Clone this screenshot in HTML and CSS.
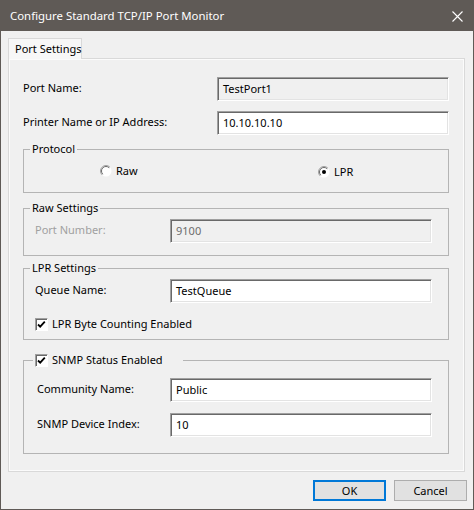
FILE: index.html
```html
<!DOCTYPE html>
<html>
  <head>
    <title>Configure Standard TCP/IP Port Monitor</title>
    <link rel="stylesheet" href="styles.css">
  </head>
  <body>
    <div class="window">
      <div class="title-bar">
        <span class="title">Configure Standard TCP/IP Port Monitor</span>
        <svg class="close-icon" width="11" height="11" viewBox="0 0 11 11">
          <path d="M0.5 0.5L10.5 10.5M10.5 0.5L0.5 10.5" stroke="#ffffff" stroke-width="1.1" fill="none"/>
        </svg>
      </div>

      <div class="tabs">
        <div class="tab">Port Settings</div>
      </div>

      <div class="panel">
        <div class="top-fields">
          <span class="field-label">Port Name:</span>
          <div class="text-box read-only">TestPort1</div>

          <span class="field-label">Printer Name or IP Address:</span>
          <div class="text-box">10.10.10.10</div>
        </div>

        <fieldset class="group protocol-group">
          <legend class="group-title">Protocol</legend>
          <div class="radio-row">
            <span class="radio raw-radio">
              <svg width="12" height="12" viewBox="0 0 12 12">
                <circle cx="6" cy="6" r="5.5" fill="#ffffff"/>
                <path d="M2.1 9.9A5.5 5.5 0 0 1 9.9 2.1" stroke="#a0a0a0" fill="none"/>
                <path d="M2.8 9.2A4.5 4.5 0 0 1 9.2 2.8" stroke="#696969" fill="none"/>
              </svg>
              Raw
            </span>
            <span class="radio lpr-radio">
              <svg width="12" height="12" viewBox="0 0 12 12">
                <circle cx="6" cy="6" r="5.5" fill="#ffffff"/>
                <path d="M2.1 9.9A5.5 5.5 0 0 1 9.9 2.1" stroke="#a0a0a0" fill="none"/>
                <path d="M2.8 9.2A4.5 4.5 0 0 1 9.2 2.8" stroke="#696969" fill="none"/>
                <circle cx="6" cy="6" r="2" fill="#000000"/>
              </svg>
              LPR
            </span>
          </div>
        </fieldset>

        <fieldset class="group raw-group">
          <legend class="group-title">Raw Settings</legend>
          <div class="group-fields">
            <span class="field-label disabled">Port Number:</span>
            <div class="text-box read-only disabled">9100</div>
          </div>
        </fieldset>

        <fieldset class="group lpr-group">
          <legend class="group-title">LPR Settings</legend>
          <div class="group-fields">
            <span class="field-label">Queue Name:</span>
            <div class="text-box">TestQueue</div>
          </div>
          <div class="check-row">
            <span class="check-box">
              <svg width="13" height="13" viewBox="0 0 13 13">
                <path d="M3 6.5L5.2 8.7L9.8 3.6" stroke="#000000" stroke-width="1.8" fill="none"/>
              </svg>
            </span>
            LPR Byte Counting Enabled
          </div>
        </fieldset>

        <fieldset class="group snmp-group">
          <legend class="group-title snmp-title">
            <span class="check-box">
              <svg width="13" height="13" viewBox="0 0 13 13">
                <path d="M3 6.5L5.2 8.7L9.8 3.6" stroke="#000000" stroke-width="1.8" fill="none"/>
              </svg>
            </span>
            SNMP Status Enabled
          </legend>
          <div class="group-fields snmp-fields">
            <span class="field-label">Community Name:</span>
            <div class="text-box">Public</div>

            <span class="field-label">SNMP Device Index:</span>
            <div class="text-box">10</div>
          </div>
        </fieldset>
      </div>

      <div class="buttons">
        <button class="dialog-button default-button">OK</button>
        <button class="dialog-button">Cancel</button>
      </div>
    </div>
  </body>
</html>
```

FILE: styles.css
```css
body {
  margin: 0;
  background-color: #f0f0f0;
  font-family: "Noto Sans", "Liberation Sans", sans-serif;
  font-size: 11px;
  color: #000000;
}

.window {
  width: 474px;
  height: 510px;
  box-sizing: border-box;
  border: 1px solid #5f5a56;
  border-top: none;
  background-color: #f0f0f0;
}

.title-bar {
  height: 31px;
  margin: 0 -1px;
  padding: 0 11px 0 10px;
  background-color: #5f5a56;
  color: #ffffff;
  display: flex;
  align-items: center;
  justify-content: space-between;
  font-size: 11.4px;
}

.close-icon {
  margin-top: 1px;
}

.tabs {
  margin-top: 7px;
  padding-left: 7px;
  display: flex;
}

.tab {
  position: relative;
  z-index: 1;
  width: 74px;
  height: 21px;
  box-sizing: border-box;
  margin-bottom: -1px;
  padding-left: 6px;
  border: 1px solid #d9d9d9;
  border-bottom: none;
  background-color: #f7f7f7;
  line-height: 19px;
  white-space: nowrap;
}

.panel {
  height: 414px;
  box-sizing: border-box;
  margin: 0 8px 0 7px;
  padding: 18px 15px 0 14px;
  border: 1px solid #d9d9d9;
  box-shadow: inset 0 0 0 1px #fbfbfb;
}

.top-fields {
  display: grid;
  grid-template-columns: 194px 232px;
  row-gap: 10px;
  align-items: center;
}

.field-label {
  margin-top: -3px;
}

.field-label.disabled {
  color: #a0a0a0;
}

.text-box {
  height: 24px;
  box-sizing: border-box;
  padding: 1px 0 0 5px;
  border: 1px solid #ffffff;
  border-top-color: #a0a0a0;
  border-left-color: #a0a0a0;
  box-shadow: inset 1px 1px 0 #696969, inset -1px -1px 0 #e3e3e3;
  background-color: #ffffff;
  line-height: 20px;
}

.text-box.read-only {
  background-color: #f0f0f0;
}

.text-box.disabled {
  color: #6d6d6d;
}

.group {
  width: 426px;
  box-sizing: border-box;
  margin: 0;
  padding: 0 15px 0 11px;
  border: 1px solid #b4b4b4;
  min-inline-size: 0;
}

.group-title {
  margin-left: -5px;
  padding: 0 2px;
  line-height: 16px;
}

.protocol-group {
  margin-top: 6px;
  padding-top: 6px;
  padding-bottom: 12px;
}

.radio-row {
  display: flex;
  padding-left: 65px;
}

.radio {
  display: flex;
  align-items: center;
  gap: 4px;
  line-height: 16px;
}

.raw-radio {
  width: 218px;
  margin-top: -1px;
}

.lpr-radio {
  margin-top: 1px;
}

.raw-group {
  margin-top: 7px;
  padding-top: 3px;
  padding-bottom: 12px;
}

.group-fields {
  display: grid;
  grid-template-columns: 135px 262px;
  row-gap: 11px;
  align-items: center;
}

.lpr-group {
  margin-top: 4px;
  padding-top: 3px;
  padding-bottom: 7px;
}

.check-row {
  margin-top: 13px;
  display: flex;
  align-items: center;
  gap: 4px;
  line-height: 16px;
}

.check-box {
  width: 13px;
  height: 13px;
  box-sizing: border-box;
  border: 1px solid #ffffff;
  border-top-color: #a0a0a0;
  border-left-color: #a0a0a0;
  box-shadow: inset 1px 1px 0 #696969;
  background-color: #ffffff;
  display: inline-flex;
}

.check-box svg {
  margin: -1px;
}

.snmp-group {
  margin-top: 12px;
  padding-top: 10px;
  padding-bottom: 16px;
}

.snmp-title {
  width: 150px;
  box-sizing: border-box;
  margin-left: -2px;
  display: flex;
  align-items: center;
  gap: 4px;
}

.snmp-fields .field-label {
  padding-left: 2px;
}

.buttons {
  margin-top: 8px;
  padding-right: 6px;
  display: flex;
  justify-content: flex-end;
  gap: 8px;
}

.dialog-button {
  width: 73px;
  height: 21px;
  padding: 0;
  border: 1px solid #adadad;
  background-color: #e1e1e1;
  font-family: "Noto Sans", "Liberation Sans", sans-serif;
  font-size: 11px;
  color: #000000;
}

.default-button {
  border: 2px solid #0078d7;
}
```
